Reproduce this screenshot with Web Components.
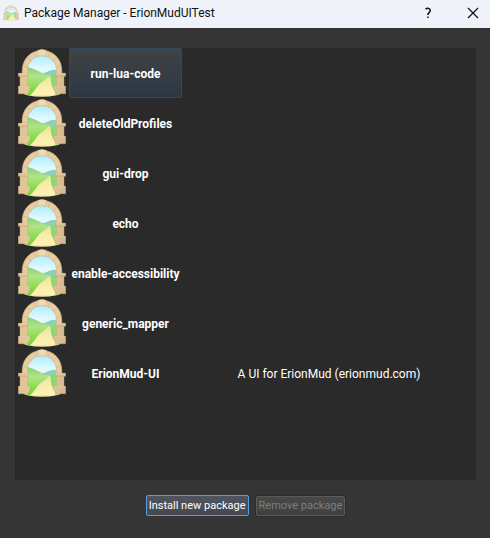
<!DOCTYPE html>
<html lang="en">
<head>
<meta charset="utf-8">
<title>Package Manager - ErionMudUITest</title>
<style>
html, body { margin: 0; height: 100%; background: #353535; }
body { font: 12px/16px Roboto, "Open Sans", sans-serif; color: #fff; }
</style>
</head>
<body>
<dialog-window>
  <title-bar slot="title">Package Manager - ErionMudUITest</title-bar>
  <package-table></package-table>
  <push-button slot="actions" primary>Install new package</push-button>
  <push-button slot="actions" disabled>Remove package</push-button>
</dialog-window>
<script>
const define = (name, html, setup) => {
  const template = document.createElement('template');
  template.innerHTML = html;
  customElements.define(name, class extends HTMLElement {
    constructor() {
      super();
      this.attachShadow({ mode: 'open' }).append(template.content.cloneNode(true));
    }
    connectedCallback() { if (setup) setup(this, this.shadowRoot); }
  });
};

define('arch-icon', `
<style>
:host { display: block; width: 48px; height: 48px; }
svg { display: block; width: 100%; height: 100%; }
</style>
<svg viewBox="0 0 48 48" aria-hidden="true">
  <defs>
    <linearGradient id="sky" gradientUnits="userSpaceOnUse" x1="0" y1="6" x2="0" y2="26"><stop offset="0" stop-color="#a8edff"/><stop offset=".7" stop-color="#e4f9ff"/></linearGradient>
    <linearGradient id="grass" gradientUnits="userSpaceOnUse" x1="0" y1="18" x2="0" y2="42"><stop offset="0" stop-color="#86d07a"/><stop offset=".4" stop-color="#b0e486"/><stop offset="1" stop-color="#80d740"/></linearGradient>
    <linearGradient id="path" x1="0" y1="0" x2="0" y2="1"><stop offset="0" stop-color="#e0e696"/><stop offset=".5" stop-color="#f8edaa"/><stop offset="1" stop-color="#fff0b0"/></linearGradient>
    <linearGradient id="stone" x1="0" y1="0" x2="1" y2="0"><stop offset="0" stop-color="#e0c497"/><stop offset=".5" stop-color="#e6cba1"/><stop offset="1" stop-color="#d6b88e"/></linearGradient>
    <clipPath id="hole"><path d="M9 46V21a15 15 0 0 1 30 0v25z"/></clipPath>
  </defs>
  <ellipse cx="24" cy="43.500" rx="19" ry="4.300" fill="#f1e6a4"/>
  <g clip-path="url(#hole)">
    <path fill="url(#sky)" d="M8 5h32v30H8z"/>
    <path fill="#8dd0b8" d="M22 25c4-1 7-2 10-3.500 3-1 6-1 8 0v10H22z"/>
    <path fill="url(#grass)" d="M8 18c6 .5 10 3.500 15 5.500 3 1.500 6 2.500 9 3.500v19H8z"/>
    <path fill="#8ad972" d="M30 27.500c3-1.500 7-1.500 10-1.500v20H30z"/>
    <path fill="url(#path)" d="M31.500 26c-2 4-7 6-10 9-3 3-5 7-9 11h25c0-4-3-7-4-10s0-7-2-10z"/>
  </g>
  <path fill="#e8cda2" stroke="#d0b184" stroke-width=".5" d="M4.200 25v-4a19.800 19.800 0 0 1 39.600 0v4H38.500v-4a14.500 14.500 0 0 0-29 0v4z"/>
  <path fill="none" stroke="#cfae80" stroke-width=".6" d="M5 17l5 1.500M9.500 8.500l4 4.500M16 3.500l2 4.500M32 3.500l-2 4.500M38.500 8.500l-4 4.500M43 17l-5 1.500"/>
  <path fill="#f2d9b1" stroke="#d0b184" stroke-width=".5" d="M19.500 1.500L24 .2l4.500 1.300-1.500 6-3-1-3 1z"/>
  <g fill="url(#stone)" stroke="#c7a779" stroke-width=".4">
    <path d="M2 27h7.500v11H2zM38.500 27H46v11h-7.500zM.3 24.300h9.900v3H.3zM37.800 24.300h9.900v3H37.800zM.3 37.300H12v3.500l-2.500 4H.3zM36 37.300h11.700v7.500h-9.200L36 40.800z"/>
  </g>
  <path fill="none" stroke="#f0dab5" stroke-width=".7" d="M.7 24.800h9.200M38.100 24.800h9.200M.7 37.800h11M36.300 37.800h11"/>
</svg>`);

define('title-bar', `
<style>
:host { display: flex; align-items: center; height: 28px; padding: 0 9px 2px 3px; box-sizing: border-box; background: #eff3f9; color: #111; }
arch-icon { width: 16px; height: 16px; margin-right: 5px; opacity: .75; }
h1 { flex: 1; margin: 0; font: inherit; white-space: nowrap; }
button { display: grid; place-items: center; width: 16px; height: 20px; padding: 0; border: 0; background: none; color: #111; font: inherit; }
button + button { margin-left: 29px; }
</style>
<arch-icon></arch-icon>
<h1><slot></slot></h1>
<button type="button" aria-label="Help"><svg width="8" height="12" viewBox="0 0 8 12" fill="none" stroke="#111" stroke-width="1.500"><path d="M1.500 2.200C3.500.7 6.300 1.200 6.300 3.400c0 2.100-2.400 2-2.400 4.600M3.900 9.500v1.600"/></svg></button>
<button type="button" aria-label="Close"><svg width="12" height="12" viewBox="0 0 12 12" stroke="#111" stroke-width="1.200"><path d="M1 1l10 10M11 1L1 11"/></svg></button>`);

define('package-table', `
<style>
:host { display: block; flex: 1; background: #2a2a2a; }
table { width: 100%; border-collapse: separate; border-spacing: 0; table-layout: fixed; }
.icon { width: 54px; }
.name { width: 113px; }
td, th { height: 50px; padding: 2px 0 0; box-sizing: border-box; text-align: center; vertical-align: middle; white-space: nowrap; }
td:first-child { padding: 0; }
th { font-weight: 700; }
arch-icon { margin-left: 3px; }
.selected { border: 1px solid #304961; border-radius: 2px; background: linear-gradient(#414344, #2c3744); }
</style>
<table aria-label="Installed packages"><colgroup><col class="icon"><col class="name"><col></colgroup><tbody></tbody></table>`,
(host, root) => {
  const packages = [
    ['run-lua-code', ''], ['deleteOldProfiles', ''], ['gui-drop', ''], ['echo', ''],
    ['enable-accessibility', ''], ['generic_mapper', ''],
    ['ErionMud-UI', 'A UI for ErionMud (erionmud.com)']
  ];
  root.querySelector('tbody').innerHTML = packages.map(([name, about], i) =>
    `<tr><td><arch-icon></arch-icon></td><th scope="row"${i ? '' : ' class="selected"'}>${name}</th><td>${about}</td></tr>`).join('');
});

define('push-button', `
<style>
:host { display: block; }
button { display: block; height: 20px; padding: 0 2px; border: 1px solid #5a5a5a; border-radius: 2px; background: linear-gradient(#484848, #404040); box-shadow: 0 0 0 1px #2d2d2d; color: #fff; font: 11px/16px Roboto, "Open Sans", sans-serif; white-space: nowrap; }
:host([primary]) button { height: 21px; border-color: #569de5; background: linear-gradient(#50545f, #454850); box-shadow: none; }
button:disabled { color: #7d7d7d; }
</style>
<button type="button"><slot></slot></button>`,
(host, root) => { root.querySelector('button').disabled = host.hasAttribute('disabled'); });

define('dialog-window', `
<style>
:host { display: flex; flex-direction: column; min-height: 100vh; background: #353535; }
main { flex: 1; display: flex; flex-direction: column; padding: 20px 14px 22px 15px; }
footer { display: flex; justify-content: center; align-items: center; gap: 7px; padding-top: 15px; }
</style>
<slot name="title"></slot>
<main><slot></slot><footer><slot name="actions"></slot></footer></main>`);
</script>
</body>
</html>
